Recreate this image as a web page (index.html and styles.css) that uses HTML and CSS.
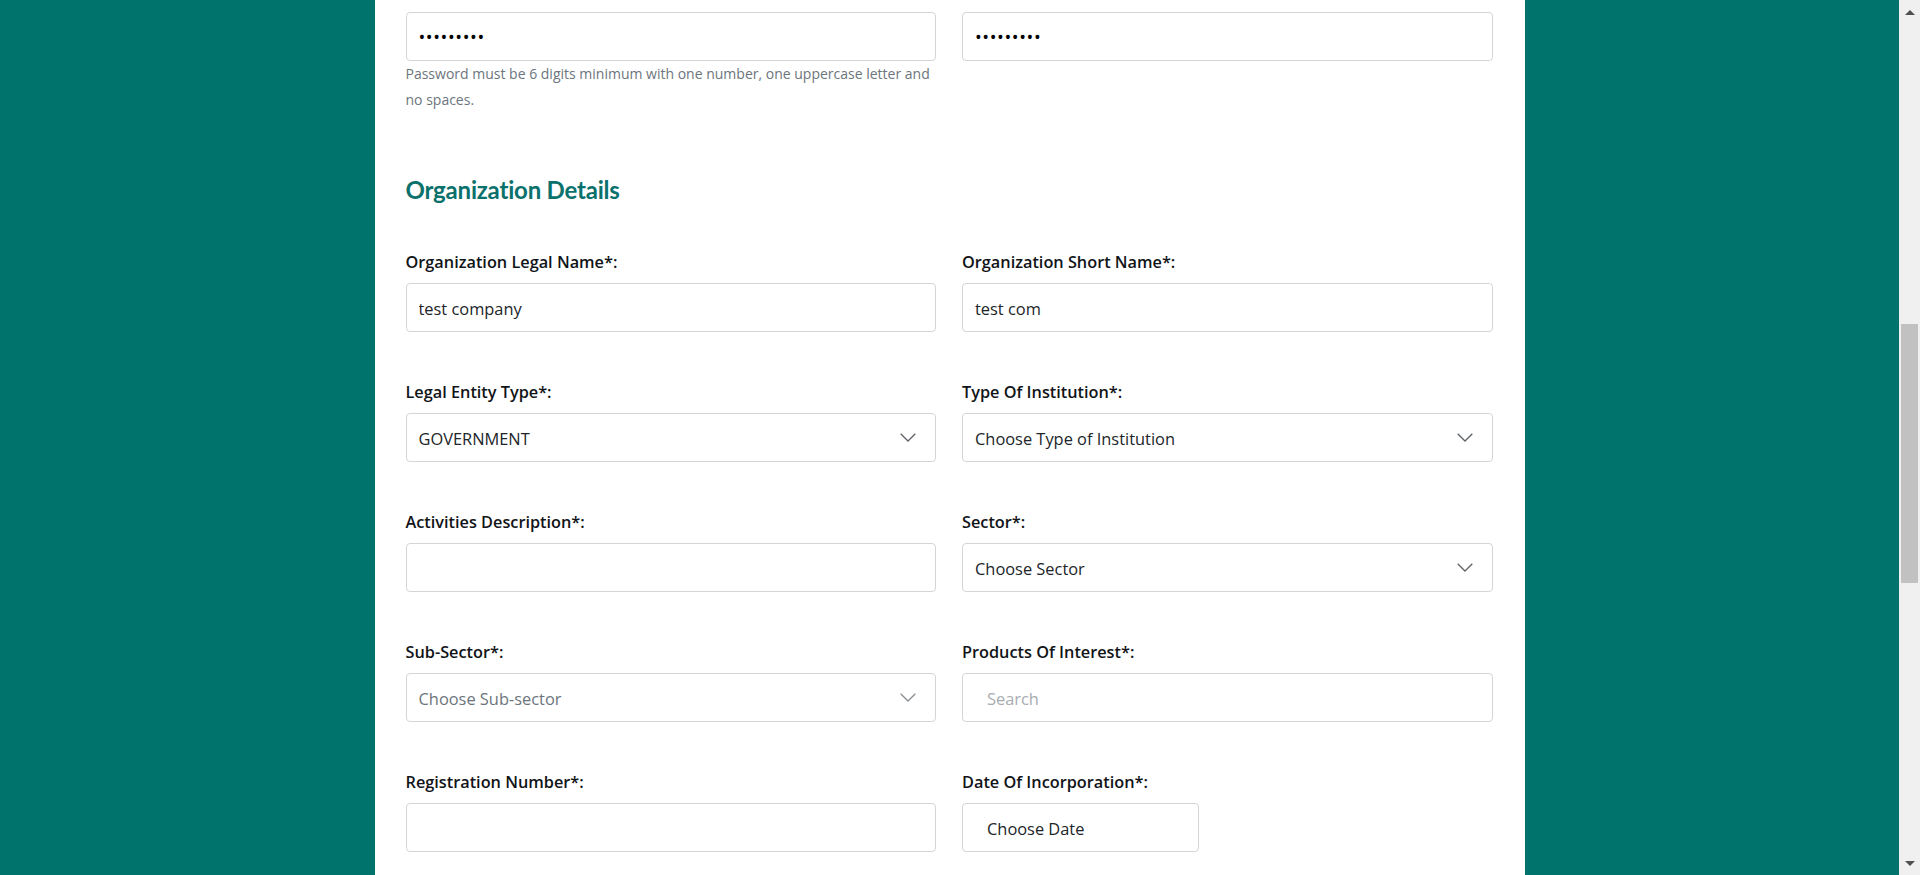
FILE: index.html
```html
<!DOCTYPE html>
<html lang="en">
<head>
<meta charset="utf-8">
<title>Registration - Organization Details</title>
<link rel="stylesheet" href="styles.css">
</head>
<body>
<div class="viewport">
  <main class="page">
    <div class="panel">
      <div class="grid pw-row">
        <div class="field">
          <input class="control pw" type="password" value="123456789">
          <p class="help">Password must be 6 digits minimum with one number, one uppercase letter and no spaces.</p>
        </div>
        <div class="field">
          <input class="control pw" type="password" value="123456789">
        </div>
      </div>

      <h2 class="section-title">Organization Details</h2>

      <div class="grid form-grid">
        <div class="field">
          <label class="label">Organization Legal Name*:</label>
          <input class="control" type="text" value="test company">
        </div>
        <div class="field">
          <label class="label">Organization Short Name*:</label>
          <input class="control" type="text" value="test com">
        </div>

        <div class="field">
          <label class="label">Legal Entity Type*:</label>
          <div class="control select"><span>GOVERNMENT</span><svg class="chev" width="16" height="9" viewBox="0 0 16 9"><path d="M0.7 0.7 L8 8 L15.3 0.7" fill="none" stroke="#5f6368" stroke-width="1.3"/></svg></div>
        </div>
        <div class="field">
          <label class="label">Type Of Institution*:</label>
          <div class="control select"><span>Choose Type of Institution</span><svg class="chev" width="16" height="9" viewBox="0 0 16 9"><path d="M0.7 0.7 L8 8 L15.3 0.7" fill="none" stroke="#5f6368" stroke-width="1.3"/></svg></div>
        </div>

        <div class="field">
          <label class="label">Activities Description*:</label>
          <input class="control" type="text">
        </div>
        <div class="field">
          <label class="label">Sector*:</label>
          <div class="control select"><span>Choose Sector</span><svg class="chev" width="16" height="9" viewBox="0 0 16 9"><path d="M0.7 0.7 L8 8 L15.3 0.7" fill="none" stroke="#5f6368" stroke-width="1.3"/></svg></div>
        </div>

        <div class="field">
          <label class="label">Sub-Sector*:</label>
          <div class="control select disabled"><span>Choose Sub-sector</span><svg class="chev" width="16" height="9" viewBox="0 0 16 9"><path d="M0.7 0.7 L8 8 L15.3 0.7" fill="none" stroke="#8a8f94" stroke-width="1.3"/></svg></div>
        </div>
        <div class="field">
          <label class="label">Products Of Interest*:</label>
          <input class="control wide-pad" type="text" placeholder="Search">
        </div>

        <div class="field">
          <label class="label">Registration Number*:</label>
          <input class="control" type="text">
        </div>
        <div class="field">
          <label class="label">Date Of Incorporation*:</label>
          <input class="control wide-pad date" type="text" placeholder="Choose Date">
        </div>
      </div>
    </div>
  </main>
  <div class="scrollbar">
    <div class="sb-btn"><span class="tri-up"></span></div>
    <div class="sb-track"><div class="sb-thumb"></div></div>
    <div class="sb-btn"><span class="tri-down"></span></div>
  </div>
</div>
</body>
</html>
```

FILE: styles.css
```css
* { box-sizing: border-box; }

html, body {
  margin: 0;
  padding: 0;
  height: 875px;
  overflow: hidden;
}

body {
  background: #00736c;
  font-family: "Open Sans", "Noto Sans", "Liberation Sans", sans-serif;
  color: #212529;
}

.viewport {
  display: flex;
  height: 875px;
}

.page {
  flex: 1;
  display: flex;
  justify-content: center;
  background: #00736c;
}

.panel {
  width: 1150px;
  height: 875px;
  background: #ffffff;
  padding: 12px 32px 0 31px;
}

.grid {
  display: grid;
  grid-template-columns: 1fr 1fr;
  column-gap: 26px;
}

.form-grid {
  margin-top: 45px;
  row-gap: 48px;
}

.field {
  display: flex;
  flex-direction: column;
  align-items: flex-start;
}

.label {
  display: block;
  font-size: 16.3px;
  font-weight: 600;
  line-height: 24px;
  height: 24px;
  margin-bottom: 9px;
  color: #111418;
}

.control {
  width: 100%;
  height: 49px;
  border: 1px solid #d3d6d9;
  border-radius: 4px;
  background: #fff;
  padding: 0 12px;
  font-family: inherit;
  font-size: 16.4px;
  color: #212529;
  outline: none;
  margin: 0;
  padding-top: 2px;
}

.pw {
  font-size: 18px;
  letter-spacing: 0.6px;
  color: #000;
  padding-top: 0;
}

.control::placeholder {
  color: #a8acb0;
}

.wide-pad {
  padding-left: 24px;
}

.date {
  width: 237px;
}

.date::placeholder {
  color: #212529;
}

.select {
  display: flex;
  align-items: center;
  justify-content: space-between;
  padding-right: 19px;
  padding-top: 2px;
}

.select.disabled span {
  color: #6c757d;
}

.chev {
  flex: none;
  margin-top: -2px;
}

.help {
  margin: 0;
  font-size: 14px;
  line-height: 26px;
  color: #6c757d;
}

.section-title {
  margin: 62px 0 0;
  font-family: "Lato", "Open Sans", sans-serif;
  font-size: 24px;
  line-height: 30px;
  font-weight: 700;
  color: #0b716c;
  letter-spacing: -0.2px;
}

/* fake browser scrollbar */
.scrollbar {
  width: 21px;
  flex: none;
  background: #f0f0f0;
  display: flex;
  flex-direction: column;
}

.sb-btn {
  height: 24px;
  display: flex;
  align-items: center;
  justify-content: center;
  flex: none;
}

.tri-up {
  width: 0;
  height: 0;
  border-left: 5px solid transparent;
  border-right: 5px solid transparent;
  border-bottom: 5px solid #505050;
}

.tri-down {
  width: 0;
  height: 0;
  border-left: 5px solid transparent;
  border-right: 5px solid transparent;
  border-top: 5px solid #505050;
}

.sb-track {
  flex: 1;
  padding-top: 300px;
}

.sb-thumb {
  height: 259px;
  margin: 0 2px;
  background: #c1c1c1;
}
```
